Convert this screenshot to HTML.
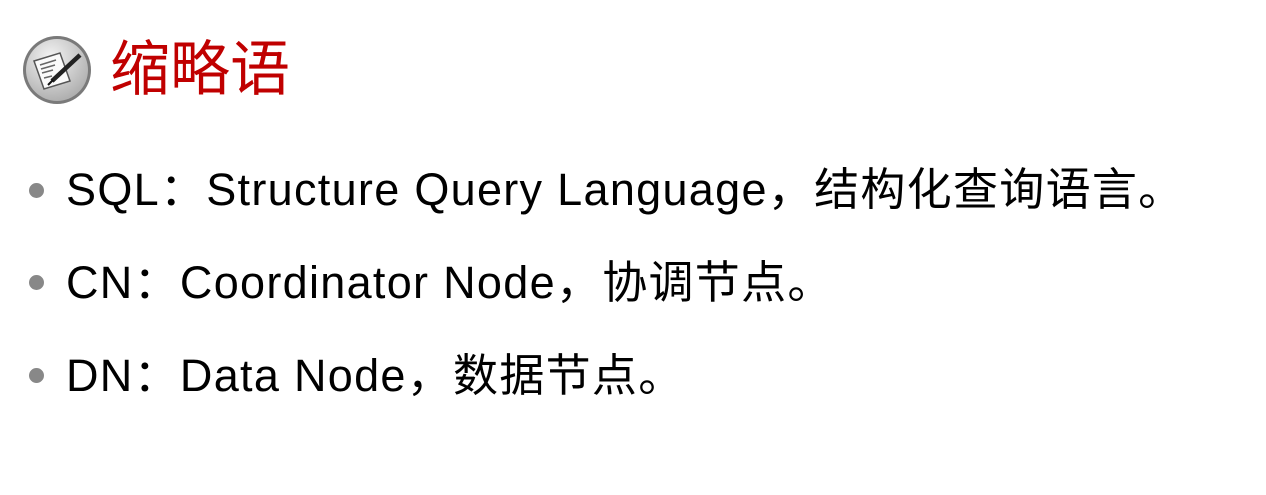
<!DOCTYPE html>
<html><head><meta charset="utf-8"><style>
body{margin:0;width:1266px;height:495px;background:#fff;position:relative;overflow:hidden;font-family:"Liberation Sans","Noto Sans CJK SC",sans-serif;}
.title{position:absolute;left:110px;top:34px;font-size:60px;line-height:72px;color:#c00000;}
.icon{position:absolute;left:22px;top:35px;}
.item{position:absolute;left:66px;font-size:45px;line-height:50px;color:#000;letter-spacing:1.3px;white-space:nowrap;}
.dot{position:absolute;left:29px;width:15px;height:15px;border-radius:50%;background:#888;}
</style></head><body>
<svg class="icon" width="70" height="70" viewBox="0 0 70 70">
<defs><radialGradient id="g" cx="40%" cy="30%" r="70%"><stop offset="0" stop-color="#f4f4f4"/><stop offset="1" stop-color="#b0b0b0"/></radialGradient></defs>
<circle cx="35" cy="35" r="34" fill="#7a7a7a"/>
<circle cx="35" cy="35" r="31" fill="url(#g)"/>
<path d="M12 26 L38 18 L48 46 L22 54 Z" fill="#fafafa" stroke="#555" stroke-width="1.5"/>
<path d="M18 30 L34 25 M19 34 L33 30 M20 38 L31 35 M22 43 L30 41" stroke="#666" stroke-width="1.5"/>
<path d="M30 46 L58 20" stroke="#222" stroke-width="4.5"/>
<path d="M26 50 L31 45" stroke="#111" stroke-width="2"/>
</svg>
<div class="title">缩略语</div>
<div class="dot" style="top:183px"></div>
<div class="item" style="top:165px">SQL：Structure Query Language，结构化查询语言。</div>
<div class="dot" style="top:275px"></div>
<div class="item" style="top:258px">CN：Coordinator Node，协调节点。</div>
<div class="dot" style="top:368px"></div>
<div class="item" style="top:351px">DN：Data Node，数据节点。</div>
</body></html>
